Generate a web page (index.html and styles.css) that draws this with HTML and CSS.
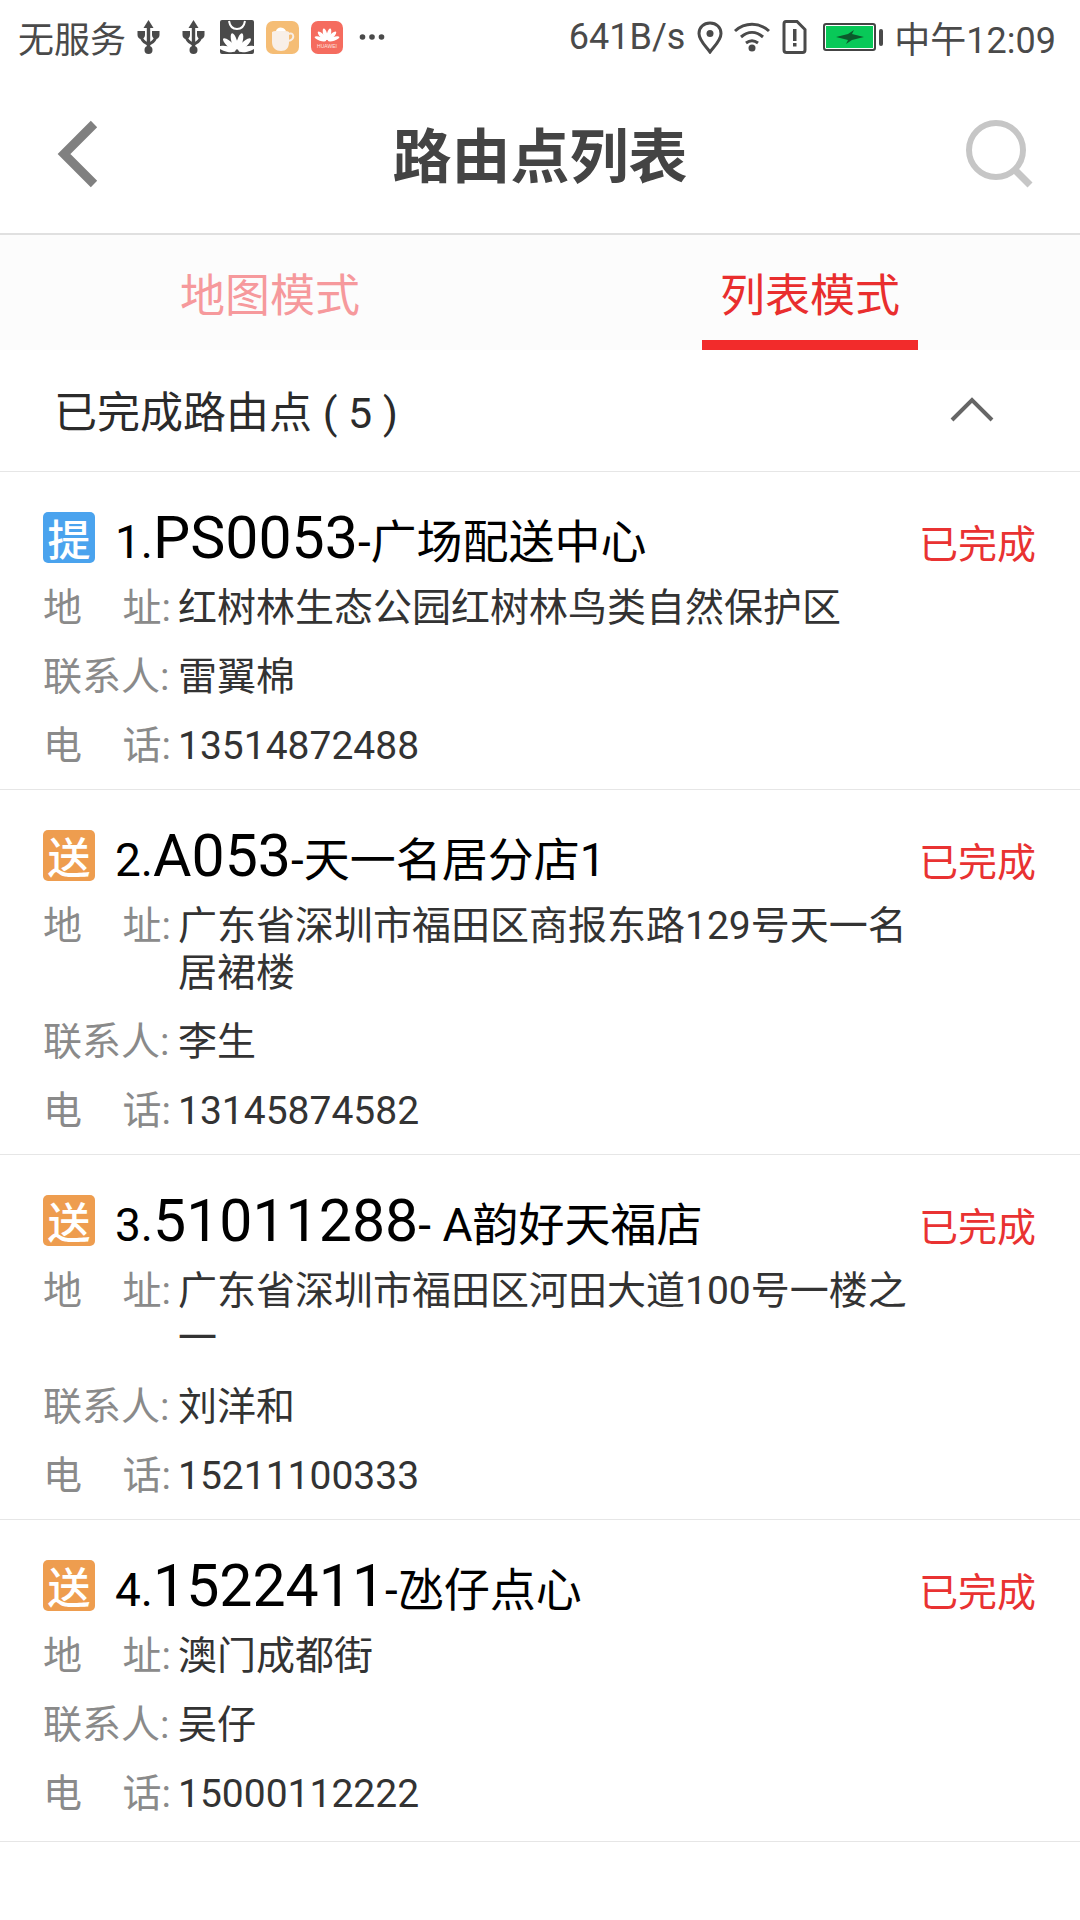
FILE: index.html
```html
<!DOCTYPE html>
<html lang="zh-CN">
<head>
    <meta charset="UTF-8">
    <title>路由点列表</title>
    <link rel="stylesheet" href="styles.css">
</head>
<body>
    <div class="statusbar">
        <div class="status-left">
            <span>无服务</span>
            <svg class="ic-usb" width="23" height="34" viewBox="0 0 23 34"><path d="M11.500 0l5 8h-3.300v22h-3.400V8H6.500z M0.500 11h7.500v4c0 2.200-1.500 4-3.800 4S0.500 17.200 0.500 15z M15 11h7.500v4c0 2.200-1.500 4-3.700 4S15 17.200 15 15z" fill="#4a4a4a"/><path d="M4.500 17c0 4.500 4 5.500 7 7.500 3-2 7-3 7-7.500" fill="none" stroke="#4a4a4a" stroke-width="3"/><circle cx="11.500" cy="30" r="4" fill="#4a4a4a"/></svg>
            <svg class="ic-usb" width="23" height="34" viewBox="0 0 23 34"><path d="M11.500 0l5 8h-3.300v22h-3.400V8H6.500z M0.500 11h7.500v4c0 2.200-1.500 4-3.800 4S0.500 17.200 0.500 15z M15 11h7.500v4c0 2.200-1.500 4-3.700 4S15 17.200 15 15z" fill="#4a4a4a"/><path d="M4.500 17c0 4.500 4 5.500 7 7.500 3-2 7-3 7-7.500" fill="none" stroke="#4a4a4a" stroke-width="3"/><circle cx="11.500" cy="30" r="4" fill="#4a4a4a"/></svg>
            <svg class="ic-shop" width="34" height="34" viewBox="0 0 34 34">
                <rect width="34" height="34" rx="2" fill="#4a4a4a"/>
                <path d="M9 1c1 6 4 8 8 8s7-2 8-8" fill="none" stroke="#fff" stroke-width="2"/>
                <g fill="#fff">
                    <ellipse cx="17" cy="21" rx="2.800" ry="8.500" transform="rotate(-78 17 31)"/>
                    <ellipse cx="17" cy="21" rx="2.800" ry="8.500" transform="rotate(-48 17 31)"/>
                    <ellipse cx="17" cy="21" rx="2.800" ry="8.500" transform="rotate(-16 17 31)"/>
                    <ellipse cx="17" cy="21" rx="2.800" ry="8.500" transform="rotate(16 17 31)"/>
                    <ellipse cx="17" cy="21" rx="2.800" ry="8.500" transform="rotate(48 17 31)"/>
                    <ellipse cx="17" cy="21" rx="2.800" ry="8.500" transform="rotate(78 17 31)"/>
                </g>
            </svg>
            <svg class="ic-app" width="33" height="33" viewBox="0 0 33 33"><rect width="33" height="33" rx="7" fill="#f5bd75"/><path d="M6 11c4-2 13-2 17 0v10c0 6-3 9-8 9s-9-3-9-9z" fill="#f8efe8"/><path d="M22 13c6-3 8 6 0 7" fill="none" stroke="#f8efe8" stroke-width="2"/><path d="M10 10c1-4 7-5 10 0z" fill="#fff"/></svg>
            <svg class="ic-app" width="32" height="33" viewBox="0 0 32 33">
                <rect width="32" height="33" rx="7" fill="#f56c5f"/>
                <g fill="#fff">
                    <ellipse cx="16" cy="13" rx="2" ry="6" transform="rotate(-72 16 20)"/>
                    <ellipse cx="16" cy="13" rx="2" ry="6" transform="rotate(-44 16 20)"/>
                    <ellipse cx="16" cy="13" rx="2" ry="6" transform="rotate(-15 16 20)"/>
                    <ellipse cx="16" cy="13" rx="2" ry="6" transform="rotate(15 16 20)"/>
                    <ellipse cx="16" cy="13" rx="2" ry="6" transform="rotate(44 16 20)"/>
                    <ellipse cx="16" cy="13" rx="2" ry="6" transform="rotate(72 16 20)"/>
                </g>
                <text class="brand" x="16" y="27" text-anchor="middle">HUAWEI</text>
            </svg>
            <svg class="ic-more" width="26" height="8" viewBox="0 0 26 8"><circle cx="3.500" cy="4" r="2.800" fill="#4a4a4a"/><circle cx="13" cy="4" r="2.800" fill="#4a4a4a"/><circle cx="22.500" cy="4" r="2.800" fill="#4a4a4a"/></svg>
        </div>
        <div class="status-right">
            <span>641B/s</span>
            <svg class="ic-pin" width="26" height="33" viewBox="0 0 26 33"><path d="M13 2C6.500 2 2 6.500 2 12.500c0 7 7 13 11 18.500 4-5.500 11-11.500 11-18.500C24 6.500 19.500 2 13 2z" fill="none" stroke="#4a4a4a" stroke-width="3"/><circle cx="13" cy="12.500" r="3.500" fill="#4a4a4a"/></svg>
            <svg class="ic-wifi" width="38" height="32" viewBox="0 0 38 32"><path d="M2 10c10-9 24-9 34 0 M8 16c7-6 15-6 22 0 M13 22c4-3 8-3 12 0" fill="none" stroke="#4a4a4a" stroke-width="3"/><circle cx="19" cy="27" r="3.500" fill="#4a4a4a"/></svg>
            <svg class="ic-sim" width="25" height="34" viewBox="0 0 25 34"><path d="M4 1.500h11l8 8V30c0 1.500-1 2.500-2.500 2.500h-16C3 32.500 2 31.500 2 30V4c0-1.500 1-2.500 2-2.500z" fill="none" stroke="#4a4a4a" stroke-width="3"/><rect x="11" y="9" width="3.500" height="12" fill="#4a4a4a"/><rect x="11" y="23" width="3.500" height="3.500" fill="#4a4a4a"/></svg>
            <div class="battery">
                <div class="battery-body">
                    <svg width="28" height="14" viewBox="0 0 28 14"><path d="M0 7l12-3 6-4-2 4 12 3-12 3-6 4 2-4z" fill="#0b5a2c"/></svg>
                </div>
                <div class="battery-cap"></div>
            </div>
            <span>中午12:09</span>
        </div>
    </div>

    <header class="titlebar">
        <svg class="back" width="42" height="68" viewBox="0 0 42 68"><path d="M38 4L8 34l30 30" fill="none" stroke="#808080" stroke-width="9"/></svg>
        <h1>路由点列表</h1>
        <svg class="search" width="68" height="68" viewBox="0 0 68 68"><circle cx="31" cy="30" r="27" fill="none" stroke="#c6c6c6" stroke-width="6"/><path d="M50 50l15 15" stroke="#c6c6c6" stroke-width="7"/></svg>
    </header>

    <nav class="tabs">
        <div class="tab">地图模式</div>
        <div class="tab active">列表模式</div>
    </nav>

    <section class="group-head">
        <span>已完成路由点 ( 5 )</span>
        <svg width="44" height="26" viewBox="0 0 44 26"><path d="M2 24L22 4l20 20" fill="none" stroke="#666" stroke-width="4"/></svg>
    </section>

    <div class="card">
        <div class="card-title">
            <span class="tag tag-pick">提</span>
            <p><span class="num">1.</span><span class="code">PS0053</span>-广场配送中心</p>
            <span class="state">已完成</span>
        </div>
        <div class="row"><span class="label"><i>地</i><i>址:</i></span><span class="value">红树林生态公园红树林鸟类自然保护区</span></div>
        <div class="row"><span class="label"><i>联系人:</i></span><span class="value">雷翼棉</span></div>
        <div class="row"><span class="label"><i>电</i><i>话:</i></span><span class="value">13514872488</span></div>
    </div>

    <div class="card">
        <div class="card-title">
            <span class="tag tag-send">送</span>
            <p><span class="num">2.</span><span class="code">A053</span>-天一名居分店1</p>
            <span class="state">已完成</span>
        </div>
        <div class="row"><span class="label"><i>地</i><i>址:</i></span><span class="value">广东省深圳市福田区商报东路129号天一名居裙楼</span></div>
        <div class="row"><span class="label"><i>联系人:</i></span><span class="value">李生</span></div>
        <div class="row"><span class="label"><i>电</i><i>话:</i></span><span class="value">13145874582</span></div>
    </div>

    <div class="card">
        <div class="card-title">
            <span class="tag tag-send">送</span>
            <p><span class="num">3.</span><span class="code">51011288</span>- A韵好天福店</p>
            <span class="state">已完成</span>
        </div>
        <div class="row"><span class="label"><i>地</i><i>址:</i></span><span class="value">广东省深圳市福田区河田大道100号一楼之一</span></div>
        <div class="row"><span class="label"><i>联系人:</i></span><span class="value">刘洋和</span></div>
        <div class="row"><span class="label"><i>电</i><i>话:</i></span><span class="value">15211100333</span></div>
    </div>

    <div class="card card-last">
        <div class="card-title">
            <span class="tag tag-send">送</span>
            <p><span class="num">4.</span><span class="code">1522411</span>-氹仔点心</p>
            <span class="state">已完成</span>
        </div>
        <div class="row"><span class="label"><i>地</i><i>址:</i></span><span class="value">澳门成都街</span></div>
        <div class="row"><span class="label"><i>联系人:</i></span><span class="value">吴仔</span></div>
        <div class="row"><span class="label"><i>电</i><i>话:</i></span><span class="value">15000112222</span></div>
    </div>
</body>
</html>
```

FILE: styles.css
```css
*{
    margin: 0;
    padding: 0;
    box-sizing: border-box;
}
body{
    background-color: white;
    font-family: Roboto, "Noto Sans CJK SC", sans-serif;
    color: #2b2b2b;
}
.statusbar{
    display: flex;
    justify-content: space-between;
    align-items: center;
    height: 74px;
    padding: 0 24px 0 18px;
    color: #4a4a4a;
    font-size: 36px;
}
.status-left, .status-right{
    display: flex;
    align-items: center;
}
.ic-usb{
    margin-left: 11px;
}
.ic-usb + .ic-usb{
    margin-left: 22px;
}
.ic-shop{
    margin-left: 15px;
}
.ic-app{
    margin-left: 12px;
}
.ic-more{
    margin-left: 16px;
}
.brand{
    font-family: "Liberation Sans", sans-serif;
    font-size: 5px;
    fill: #fde3de;
}
.ic-pin{
    margin-left: 12px;
}
.ic-wifi{
    margin-left: 10px;
}
.ic-sim{
    margin-left: 11px;
}
.battery{
    display: flex;
    align-items: center;
    gap: 3px;
    margin: 0 11px 0 16px;
}
.battery-body{
    display: flex;
    align-items: center;
    justify-content: center;
    width: 53px;
    height: 28px;
    background-color: #08c958;
    border: 2px solid #444;
    border-radius: 3px;
    box-shadow: inset 0 0 0 1px white;
}
.battery-cap{
    width: 4px;
    height: 17px;
    background-color: #4a4a4a;
    border-radius: 2px;
}
.titlebar{
    display: grid;
    grid-template-columns: 1fr auto 1fr;
    align-items: center;
    height: 161px;
    padding: 0 47px;
    border-bottom: 2px solid #e0e0e0;
}
.titlebar h1{
    font-size: 59px;
    font-weight: bold;
    color: #444;
    padding-bottom: 3px;
}
.back{
    margin-left: 9px;
}
.search{
    justify-self: end;
}
.tabs{
    display: flex;
    height: 115px;
    background-color: #fcfcfc;
}
.tab{
    flex: 1;
    display: flex;
    justify-content: center;
    align-items: center;
    position: relative;
    font-size: 45px;
    color: #f6999c;
}
.tab.active{
    color: #e92e2e;
}
.tab.active::after{
    content: "";
    position: absolute;
    left: 50%;
    bottom: 0;
    width: 216px;
    height: 10px;
    margin-left: -108px;
    background-color: #f22b2b;
}
.group-head{
    display: flex;
    align-items: center;
    justify-content: space-between;
    height: 122px;
    padding: 0 86px 3px 54px;
    font-size: 43px;
    border-bottom: 1px solid #e6e6e6;
}
.card{
    padding: 30px 44px 19px 43px;
    border-bottom: 1px solid #e6e6e6;
}
.card-last{
    padding-bottom: 23px;
}
.card-title{
    display: flex;
    align-items: center;
    height: 70px;
    color: black;
    font-size: 46px;
}
.card-title p{
    flex: 1;
    margin-left: 20px;
}
.code{
    font-size: 59px;
}
.tag{
    display: flex;
    justify-content: center;
    align-items: center;
    width: 52px;
    height: 51px;
    border-radius: 5px;
    color: white;
    font-size: 43px;
    font-weight: 500;
}
.tag-pick{
    background-color: #4aa3ee;
}
.tag-send{
    background-color: #ee9d4f;
}
.state{
    color: #e93232;
    font-size: 39px;
    padding-top: 8px;
}
.row{
    display: flex;
    font-size: 39px;
    line-height: 47px;
}
.row + .row{
    margin-top: 22px;
}
.card-title + .row{
    margin-top: 13px;
}
.label{
    display: flex;
    justify-content: space-between;
    flex: none;
    width: 128px;
    margin-right: 7px;
    color: #8a8a8a;
}
.label i{
    font-style: normal;
}
.value{
    width: 735px;
    color: #333;
}
```
